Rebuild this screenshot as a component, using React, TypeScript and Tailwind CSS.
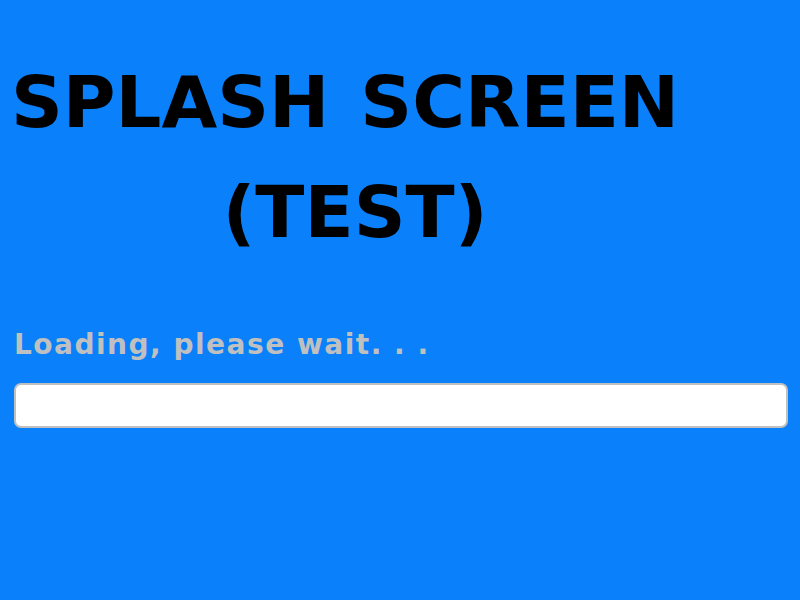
import React from 'react';

const font = { fontFamily: '"Comic Sans MS", "DejaVu Sans", sans-serif' };

const App: React.FC = () => {
  return (
    <div className="w-[800px] h-[600px] bg-[#0a80fa] overflow-hidden" style={font}>
      {/* Title */}
      <div className="w-[690px] pt-[47px] text-center text-black text-[72px] font-bold leading-[110px] tracking-[0px] [word-spacing:6px] [font-kerning:none]">
        <div>SPLASH SCREEN</div>
        <div className="pl-[20px]">(TEST)</div>
      </div>

      {/* Loading */}
      <div className="px-[14px] mt-[60px]">
        <div className="text-[#c0c0c0] text-[28px] font-bold leading-[36px] tracking-[1.5px]">Loading, please wait. . .</div>
        <div className="mt-[20px] w-[774px] h-[45px] bg-white border-2 border-[#c0c0c0] rounded-[7px]"></div>
      </div>
    </div>
  );
};

export default App;
